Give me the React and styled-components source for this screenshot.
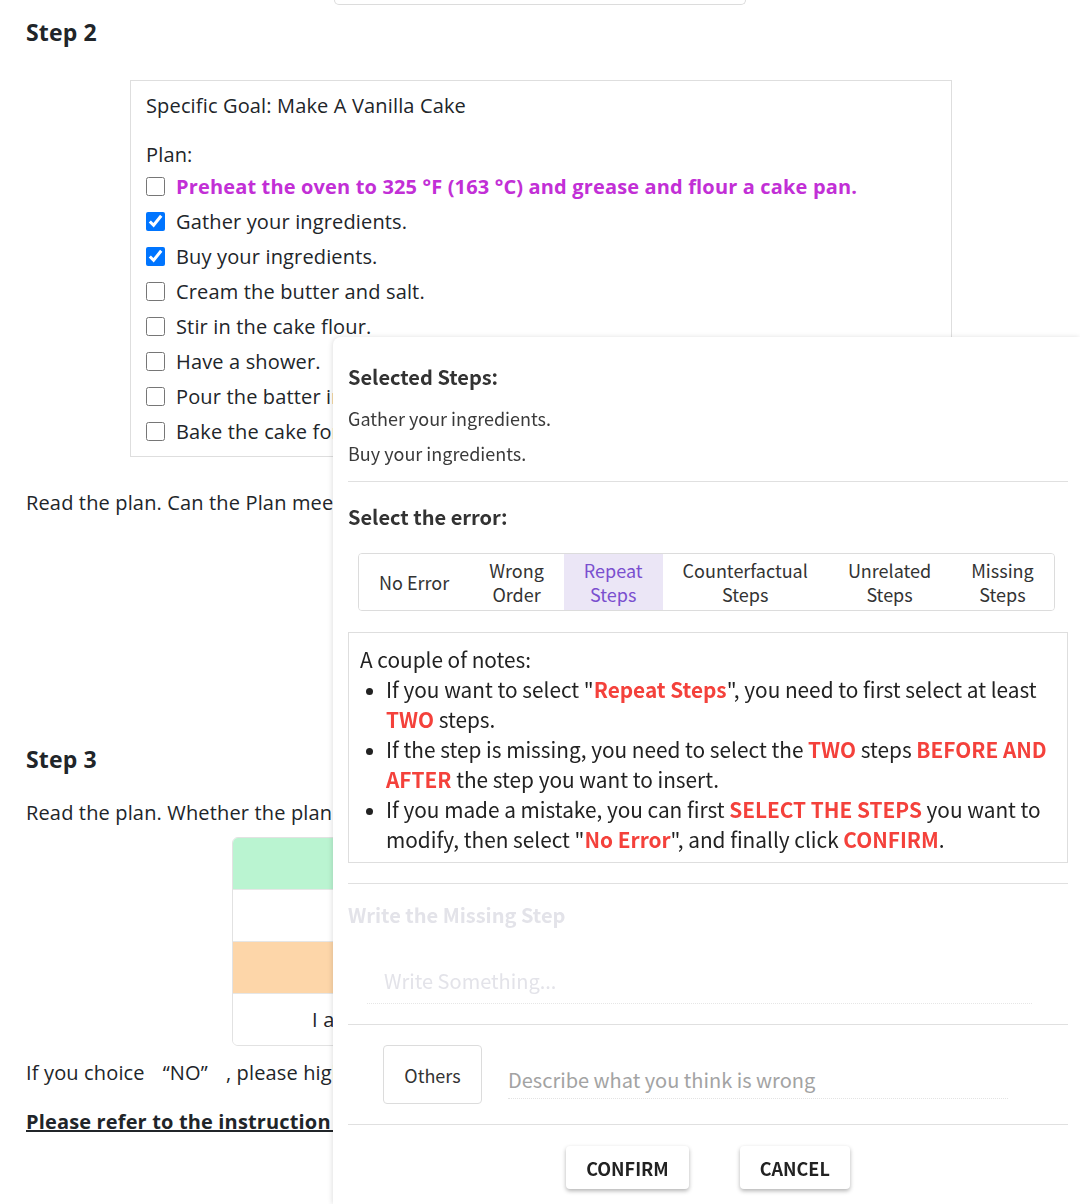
import styled, { createGlobalStyle } from 'styled-components';

const GlobalStyle = createGlobalStyle`
  body {
    margin: 0;
    background: #fff;
    color: #212529;
    font-family: "Open Sans", "Noto Sans", sans-serif;
    letter-spacing: 0.15px;
  }
`;

const planSteps = [
  { text: 'Preheat the oven to 325 °F (163 °C) and grease and flour a cake pan.', highlight: true },
  { text: 'Gather your ingredients.', checked: true },
  { text: 'Buy your ingredients.', checked: true },
  { text: 'Cream the butter and salt.' },
  { text: 'Stir in the cake flour.' },
  { text: 'Have a shower.' },
  { text: 'Pour the batter into the cake pan.' },
  { text: 'Bake the cake for 1 hour 15 minutes.' },
];

const errorTabs = [
  ['No Error'],
  ['Wrong', 'Order'],
  ['Repeat', 'Steps'],
  ['Counterfactual', 'Steps'],
  ['Unrelated', 'Steps'],
  ['Missing', 'Steps'],
];

const answerRows = [
  { tone: 'green', text: 'YES' },
  { tone: 'white', text: '' },
  { tone: 'orange', text: 'NO' },
  { tone: 'white', text: 'I am not sure whether the plan can be executed.' },
];

export default function App() {
  return (
    <>
      <GlobalStyle />
      <PageCard>
        <TopStub />
        <StepTitle>Step 2</StepTitle>
        <PlanBox>
          <Goal>Specific Goal: Make A Vanilla Cake</Goal>
          <PlanLabel>Plan:</PlanLabel>
          {planSteps.map(step => (
            <StepRow key={step.text}>
              <Check type="checkbox" defaultChecked={!!step.checked} />
              <StepText $highlight={step.highlight}>{step.text}</StepText>
            </StepRow>
          ))}
        </PlanBox>
        <Question>Read the plan. Can the Plan meet the specific goal?</Question>
        <ChoiceArea>
          <ChoiceButton>YES</ChoiceButton>
          <ChoiceButton>NO</ChoiceButton>
        </ChoiceArea>
        <StepTitle>Step 3</StepTitle>
        <Question $gap="26px">
          Read the plan. Whether the plan is executable in the real world?
        </Question>
        <AnswerTable>
          {answerRows.map((row, i) => (
            <AnswerRow key={i} $tone={row.tone}>
              {row.text}
            </AnswerRow>
          ))}
        </AnswerTable>
        <Question $gap="12px">
          If you choice<Quote>“NO”</Quote>, please highlight the wrong steps
          and select the error type.
        </Question>
        <InstructionLink>
          Please refer to the instruction to see more examples.
        </InstructionLink>
      </PageCard>

      <Drawer>
        <DrawerHeading>Selected Steps:</DrawerHeading>
        <SelectedItem>Gather your ingredients.</SelectedItem>
        <SelectedItem>Buy your ingredients.</SelectedItem>
        <Divider />
        <DrawerHeading $gap="21px">Select the error:</DrawerHeading>
        <TabGroup>
          {errorTabs.map(lines => (
            <Tab key={lines.join(' ')} $active={lines[0] === 'Repeat'}>
              {lines.map(l => (
                <span key={l}>{l}</span>
              ))}
            </Tab>
          ))}
        </TabGroup>
        <Notes>
          A couple of notes:
          <NoteList>
            <li>
              If you want to select "<Red>Repeat Steps</Red>", you need to
              first select at least <Red>TWO</Red> steps.
            </li>
            <li>
              If the step is missing, you need to select the <Red>TWO</Red>{' '}
              steps <Red>BEFORE AND AFTER</Red> the step you want to insert.
            </li>
            <li>
              If you made a mistake, you can first{' '}
              <Red>SELECT THE STEPS</Red> you want to modify, then select "
              <Red>No Error</Red>", and finally click <Red>CONFIRM</Red>.
            </li>
          </NoteList>
        </Notes>
        <Divider $gap="20px" />
        <DrawerHeading $gap="17px" $faded>
          Write the Missing Step
        </DrawerHeading>
        <MissingInput disabled placeholder="Write Something..." />
        <Divider $gap="20px" />
        <OthersRow>
          <OthersButton>Others</OthersButton>
          <DescribeInput placeholder="Describe what you think is wrong" />
        </OthersRow>
        <Divider $gap="20px" />
        <ActionRow>
          <ActionButton>CONFIRM</ActionButton>
          <ActionButton>CANCEL</ActionButton>
        </ActionRow>
      </Drawer>
    </>
  );
}

const PageCard = styled.main`
  padding: 0 26px 30px 26px;
  box-shadow: 0 2px 3px rgba(0, 0, 0, 0.3);
`;

const TopStub = styled.div`
  width: 410px;
  height: 4px;
  margin: 0 auto;
  border: 1px solid #dcdcdc;
  border-top: 0;
  border-radius: 0 0 6px 6px;
`;

const StepTitle = styled.h2`
  margin: 14px 0 0 0;
  font-size: 23px;
  line-height: 26px;
  font-weight: 700;
  color: #212529;
`;

const PlanBox = styled.section`
  margin: 35px 0 0 104px;
  width: 822px;
  box-sizing: border-box;
  padding: 10px 15px 7px 15px;
  border: 1px solid #dedede;
  font-size: 20px;
`;

const Goal = styled.div`
  line-height: 30px;
  margin-bottom: 20px;
`;

const PlanLabel = styled.div`
  line-height: 28px;
`;

const StepRow = styled.label`
  display: flex;
  align-items: center;
  gap: 11px;
  height: 35px;
`;

const Check = styled.input`
  width: 19px;
  height: 19px;
  margin: 0;
`;

const StepText = styled.span`
  color: ${p => (p.$highlight ? '#c22fd6' : '#212529')};
  font-weight: ${p => (p.$highlight ? 700 : 400)};
`;

const Question = styled.p`
  margin: ${p => p.$gap || '31px'} 0 0 0;
  font-size: 20px;
  line-height: 30px;
`;

const Quote = styled.span`
  padding: 0 18px;
`;

const ChoiceArea = styled.div`
  display: flex;
  justify-content: center;
  align-items: center;
  gap: 40px;
  height: 214px;
`;

const ChoiceButton = styled.button`
  width: 120px;
  height: 44px;
  font: 700 18px "Open Sans", sans-serif;
  background: #fff;
  border: 1px solid #ccc;
  border-radius: 4px;
`;

const AnswerTable = styled.div`
  width: 616px;
  margin: 9px 0 0 206px;
  border: 1px solid #e2e2e2;
  border-radius: 6px;
  overflow: hidden;
`;

const rowColors = {
  green: '#baf4d1',
  orange: '#fdd6a9',
  white: '#ffffff',
};

const AnswerRow = styled.div`
  height: 51px;
  display: flex;
  align-items: center;
  justify-content: center;
  font-size: 20px;
  background: ${p => rowColors[p.$tone]};
  & + & {
    border-top: 1px solid #e6e6e6;
  }
`;

const InstructionLink = styled.a`
  display: block;
  margin-top: 19px;
  font-size: 20px;
  line-height: 30px;
  font-weight: 700;
  color: #212529;
  text-decoration: underline;
`;

const Drawer = styled.aside`
  position: fixed;
  left: 333px;
  top: 337px;
  right: 0;
  bottom: 0;
  box-sizing: border-box;
  padding: 26px 12px 0 15px;
  background: #fff;
  border-radius: 8px 0 0 0;
  box-shadow: -1px 0 5px rgba(0, 0, 0, 0.12);
  font-family: "Noto Sans CJK SC", "Open Sans", sans-serif;
  letter-spacing: 0;
  color: #333;
`;

const DrawerHeading = styled.h3`
  margin: ${p => p.$gap || '0'} 0 10px 0;
  font-size: 20px;
  line-height: 28px;
  font-weight: 700;
  color: ${p => (p.$faded ? '#e3e3e9' : '#333')};
`;

const SelectedItem = styled.div`
  font-size: 18px;
  line-height: 35px;
  color: #3a3a3a;
`;

const Divider = styled.hr`
  margin: ${p => p.$gap || '10px'} 0 0 0;
  border: 0;
  border-top: 1px solid #e0e0e0;
`;

const TabGroup = styled.div`
  display: inline-flex;
  margin: 12px 0 0 10px;
  border: 1px solid #dcdcdc;
  border-radius: 4px;
  overflow: hidden;
`;

const Tab = styled.div`
  display: flex;
  flex-direction: column;
  justify-content: center;
  align-items: center;
  padding: 4px 20px;
  height: 48px;
  font-size: 18px;
  line-height: 24px;
  color: ${p => (p.$active ? '#7a4fcf' : '#333')};
  background: ${p => (p.$active ? '#ebe6f6' : '#fff')};
`;

const Notes = styled.div`
  margin-top: 21px;
  padding: 11px 10px 8px 11px;
  border: 1px solid #dedede;
  font-size: 20.8px;
  line-height: 30px;
  color: #222;
`;

const NoteList = styled.ul`
  margin: 0;
  padding-left: 26px;
  li::marker {
    font-size: 17px;
  }
`;

const Red = styled.b`
  color: #f4413b;
`;

const MissingInput = styled.input`
  display: block;
  width: 665px;
  box-sizing: border-box;
  margin: 27px 0 0 19px;
  padding: 10px 17px 8px 17px;
  border: 0;
  border-bottom: 1px dotted #e6e6e6;
  background: transparent;
  font: 20px "Noto Sans CJK SC", sans-serif;
  outline: none;
  &::placeholder {
    color: #e3e3e9;
  }
`;

const OthersRow = styled.div`
  display: flex;
  align-items: flex-start;
  gap: 26px;
  margin: 20px 0 0 35px;
`;

const OthersButton = styled.button`
  width: 99px;
  height: 59px;
  background: #fff;
  border: 1px solid #dcdcdc;
  border-radius: 4px;
  font: 18px "Noto Sans CJK SC", sans-serif;
  color: #333;
`;

const DescribeInput = styled.input`
  width: 500px;
  margin-top: 20px;
  padding: 0 0 4px 0;
  border: 0;
  border-bottom: 1px dotted #e3e3e3;
  font: 20px "Noto Sans CJK SC", sans-serif;
  outline: none;
  &::placeholder {
    color: #a3a3a3;
  }
`;

const ActionRow = styled.div`
  display: flex;
  justify-content: center;
  gap: 51px;
  margin-top: 21px;
`;

const ActionButton = styled.button`
  height: 43px;
  padding: 0 20px;
  background: #fff;
  border: 0;
  border-radius: 4px;
  box-shadow: 0 2px 4px rgba(0, 0, 0, 0.3);
  font: 700 18px "Noto Sans CJK SC", sans-serif;
  color: #222;
`;
